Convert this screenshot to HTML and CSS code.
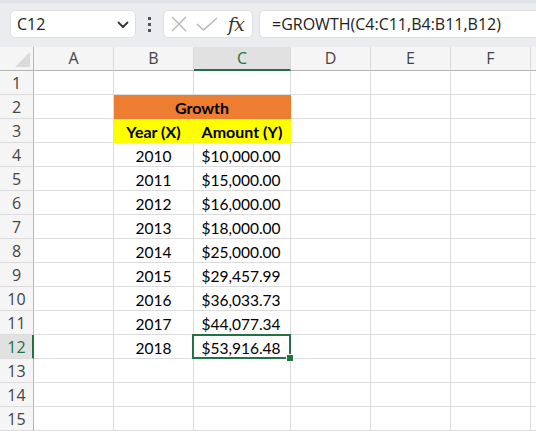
FILE: index.html
```html
<!DOCTYPE html>
<html>
<head>
<meta charset="utf-8">
<link rel="stylesheet" href="styles.css">
</head>
<body>
<div class="app">
  <div class="toolbar">
    <div class="namebox">
      <span class="name">C12</span>
      <svg class="chev" width="12" height="8" viewBox="0 0 12 8"><path d="M1.5 1.5 L6 6 L10.5 1.5" fill="none" stroke="#333" stroke-width="1.8" stroke-linecap="round" stroke-linejoin="round"/></svg>
    </div>
    <div class="dots"><i></i><i></i><i></i></div>
    <div class="fxbox">
      <svg class="ico" width="18" height="18" viewBox="0 0 18 18"><path d="M2 2 L16 16 M16 2 L2 16" stroke="#b4b4b4" stroke-width="1.3" fill="none"/></svg>
      <svg class="ico" width="22" height="14" viewBox="0 0 22 14"><path d="M1 7 L7.5 13 L21 1" stroke="#b4b4b4" stroke-width="1.3" fill="none"/></svg>
      <span class="fx">fx</span>
    </div>
    <div class="formula">=GROWTH(C4:C11,B4:B11,B12)</div>
  </div>
  <div class="sheet">
    <div class="ch corner"><span class="tri"></span></div>
    <div class="ch">A</div><div class="ch">B</div><div class="ch sel">C</div><div class="ch">D</div><div class="ch">E</div><div class="ch">F</div><div class="ch"></div>

    <div class="rh">1</div><div class="c"></div><div class="c"></div><div class="c"></div><div class="c"></div><div class="c"></div><div class="c"></div><div class="c"></div>

    <div class="rh">2</div><div class="c"></div><div class="c title">Growth</div><div class="c"></div><div class="c"></div><div class="c"></div><div class="c"></div>

    <div class="rh">3</div><div class="c"></div><div class="c head">Year (X)</div><div class="c head">Amount (Y)</div><div class="c"></div><div class="c"></div><div class="c"></div><div class="c"></div>

    <div class="rh">4</div><div class="c"></div><div class="c ctr">2010</div><div class="c num">$10,000.00</div><div class="c"></div><div class="c"></div><div class="c"></div><div class="c"></div>
    <div class="rh">5</div><div class="c"></div><div class="c ctr">2011</div><div class="c num">$15,000.00</div><div class="c"></div><div class="c"></div><div class="c"></div><div class="c"></div>
    <div class="rh">6</div><div class="c"></div><div class="c ctr">2012</div><div class="c num">$16,000.00</div><div class="c"></div><div class="c"></div><div class="c"></div><div class="c"></div>
    <div class="rh">7</div><div class="c"></div><div class="c ctr">2013</div><div class="c num">$18,000.00</div><div class="c"></div><div class="c"></div><div class="c"></div><div class="c"></div>
    <div class="rh">8</div><div class="c"></div><div class="c ctr">2014</div><div class="c num">$25,000.00</div><div class="c"></div><div class="c"></div><div class="c"></div><div class="c"></div>
    <div class="rh">9</div><div class="c"></div><div class="c ctr">2015</div><div class="c num">$29,457.99</div><div class="c"></div><div class="c"></div><div class="c"></div><div class="c"></div>
    <div class="rh">10</div><div class="c"></div><div class="c ctr">2016</div><div class="c num">$36,033.73</div><div class="c"></div><div class="c"></div><div class="c"></div><div class="c"></div>
    <div class="rh">11</div><div class="c"></div><div class="c ctr">2017</div><div class="c num">$44,077.34</div><div class="c"></div><div class="c"></div><div class="c"></div><div class="c"></div>
    <div class="rh sel">12</div><div class="c"></div><div class="c ctr">2018</div><div class="c num active">$53,916.48<span class="handle"></span></div><div class="c"></div><div class="c"></div><div class="c"></div><div class="c"></div>
    <div class="rh">13</div><div class="c"></div><div class="c"></div><div class="c"></div><div class="c"></div><div class="c"></div><div class="c"></div><div class="c"></div>
    <div class="rh">14</div><div class="c"></div><div class="c"></div><div class="c"></div><div class="c"></div><div class="c"></div><div class="c"></div><div class="c"></div>
    <div class="rh">15</div><div class="c"></div><div class="c"></div><div class="c"></div><div class="c"></div><div class="c"></div><div class="c"></div><div class="c"></div>
  </div>
</div>
</body>
</html>
```

FILE: styles.css
```css
html, body {
  margin: 0;
  padding: 0;
  background: #ffffff;
}
.app {
  width: 536px;
  height: 431px;
  overflow: hidden;
}
.toolbar {
  height: 47px;
  box-sizing: border-box;
  background: #eaecef;
  border-top: 3px solid #dfe2e6;
  display: flex;
  align-items: flex-start;
  padding-top: 7px;
  padding-left: 10px;
  font-family: "Open Sans", "Noto Sans", sans-serif;
}
.namebox {
  width: 126px;
  height: 28px;
  box-sizing: border-box;
  background: #fff;
  border: 1px solid #dcdee1;
  border-radius: 5px;
  display: flex;
  align-items: center;
  justify-content: space-between;
  padding: 0 6px 0 6px;
  flex: none;
}
.name {
  font-size: 16px;
  color: #222;
}
.chev {
  margin-top: 2px;
}
.dots {
  width: 27px;
  height: 28px;
  display: flex;
  flex-direction: column;
  align-items: center;
  justify-content: center;
  gap: 3px;
  flex: none;
}
.dots i {
  display: block;
  width: 3px;
  height: 3px;
  background: #555;
}
.fxbox {
  width: 90px;
  height: 28px;
  box-sizing: border-box;
  background: #fff;
  border: 1px solid #dcdee1;
  border-radius: 5px;
  display: flex;
  align-items: center;
  padding-left: 6px;
  gap: 8px;
  flex: none;
}
.fx {
  font-family: "DejaVu Serif", "Liberation Serif", serif;
  font-style: italic;
  font-size: 18.5px;
  color: #333;
  margin-left: 2px;
  letter-spacing: -0.5px;
}
.formula {
  margin-left: 6px;
  height: 28px;
  flex: 1;
  box-sizing: border-box;
  background: #fff;
  border: 1px solid #dcdee1;
  border-right: none;
  border-radius: 5px 0 0 5px;
  padding-left: 12px;
  font-size: 16px;
  line-height: 26px;
  color: #222;
  white-space: nowrap;
}
.sheet {
  display: grid;
  grid-template-columns: 34px 80px 80px 97px 80px 80px 80px 80px;
  grid-template-rows: 24px;
  grid-auto-rows: 24px;
  font-family: "Lato", "Liberation Sans", sans-serif;
  font-size: 15.5px;
  color: #000;
}
.ch, .rh, .c {
  box-sizing: border-box;
  position: relative;
}
.ch {
  background: #f5f5f5;
  border-right: 1px solid #d9d9d9;
  border-bottom: 1px solid #b5b5b5;
  font-family: "Open Sans", "Noto Sans", sans-serif;
  font-size: 16px;
  color: #444;
  display: flex;
  align-items: center;
  justify-content: center;
  padding-bottom: 1px;
}
.ch.corner {
  border-right: 1px solid #b5b5b5;
}
.tri {
  position: absolute;
  right: 3px;
  bottom: 3px;
  width: 0;
  height: 0;
  border-left: 15px solid transparent;
  border-bottom: 15px solid #dadada;
}
.ch.sel {
  background: #e1e1e1;
  color: #1e7145;
  border-bottom: 2px solid #217346;
  padding-bottom: 0;
}
.rh {
  background: #f5f5f5;
  border-right: 1px solid #b5b5b5;
  border-bottom: 1px solid #dcdcdc;
  font-family: "Open Sans", "Noto Sans", sans-serif;
  font-size: 16px;
  color: #444;
  display: flex;
  align-items: center;
  justify-content: center;
}
.rh.sel {
  background: #e1e1e1;
  color: #1e7145;
  border-right: 2px solid #217346;
  padding-left: 1px;
}
.c {
  border-right: 1px solid #dcdcdc;
  border-bottom: 1px solid #dcdcdc;
  display: flex;
  align-items: center;
  white-space: nowrap;
  padding-top: 2px;
}
.title {
  grid-column: span 2;
  background: #ed7d31;
  border-color: #ed7d31;
  justify-content: center;
  font-weight: bold;
  font-size: 16px;
}
.head {
  background: #ffff00;
  border-color: #ffff00;
  justify-content: center;
  font-weight: bold;
  font-size: 16px;
}
.ctr {
  justify-content: center;
}
.num {
  justify-content: center;
  padding-right: 2px;
}
.active::after {
  content: "";
  position: absolute;
  left: -2px;
  top: -1px;
  right: -1px;
  bottom: -1px;
  border: 2px solid #217346;
}
.handle {
  position: absolute;
  right: -4px;
  bottom: -4px;
  width: 6px;
  height: 6px;
  background: #217346;
  border: 1px solid #fff;
  z-index: 2;
}
```
